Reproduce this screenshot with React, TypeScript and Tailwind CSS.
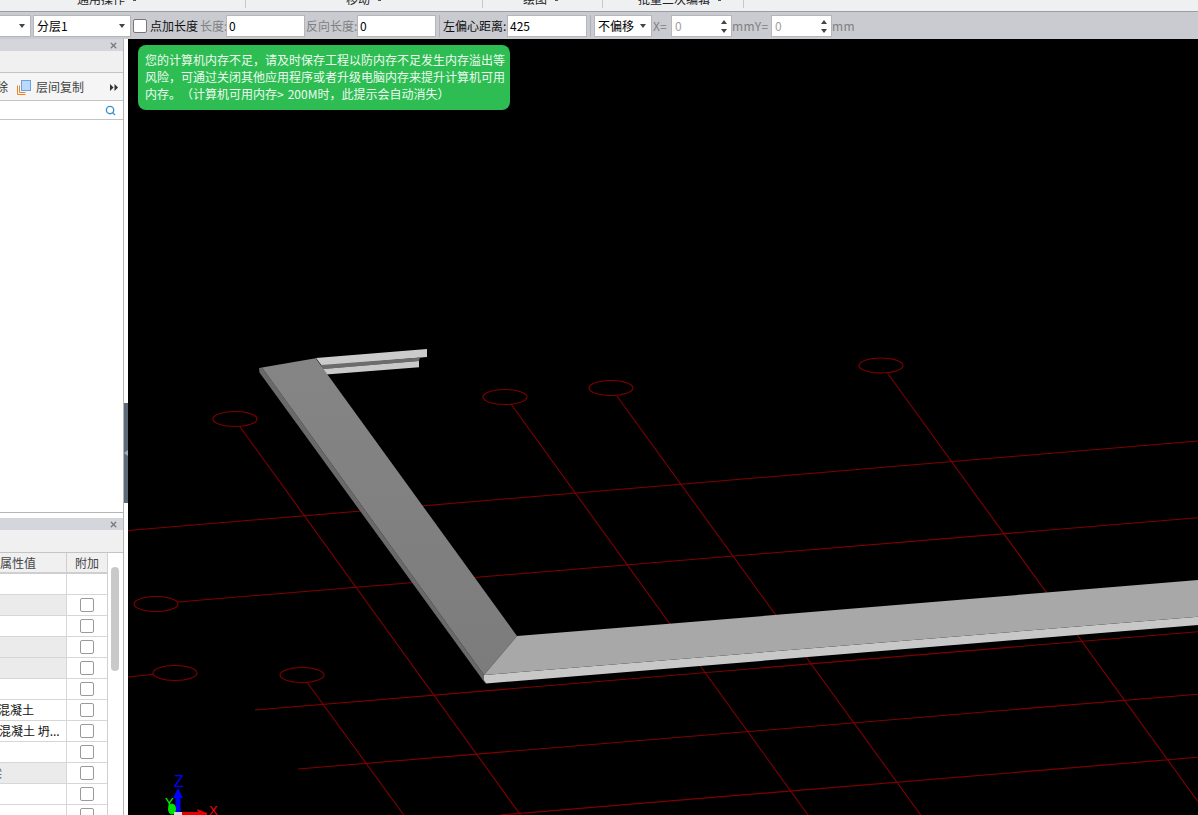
import React from 'react';
import { Search, X } from 'lucide-react';

const Caret: React.FC<{ up?: boolean }> = ({ up }) => (
  <svg width="6" height="4" viewBox="0 0 6 4" className="shrink-0">
    <polygon points={up ? '3,0 6,4 0,4' : '0,0 6,0 3,4'} fill="#444" />
  </svg>
);

const Select: React.FC<{ label?: string; className: string }> = ({ label, className }) => (
  <div className={`flex h-[22px] shrink-0 items-center justify-between border border-[#b4b6ba] bg-white pl-[3px] pr-[5px] text-black ${className}`}>
    <span>{label}</span>
    <Caret />
  </div>
);

const TextField: React.FC<{ value: string; className: string }> = ({ value, className }) => (
  <div className={`flex h-[22px] shrink-0 items-center border border-[#b4b6ba] bg-white pl-[2px] text-black ${className}`}>
    {value}
  </div>
);

const Spinner: React.FC<{ className: string }> = ({ className }) => (
  <div className={`flex h-[22px] shrink-0 items-center justify-between border border-[#b4b6ba] bg-white pl-[3px] pr-[4px] text-[#a0a0a0] ${className}`}>
    <span>0</span>
    <div className="flex flex-col gap-[5px]">
      <Caret up />
      <Caret />
    </div>
  </div>
);

const ToolbarSep = () => <div className="mx-[3px] h-[22px] w-px shrink-0 bg-[#aeb0b4]" />;

const PanelHeader = () => (
  <div className="flex h-[12px] shrink-0 items-center justify-end bg-[#d4d6db] pr-[5px]">
    <X size={9} strokeWidth={3.5} color="#777" />
  </div>
);

const ribbonGroups = [
  { label: '通用操作', width: 'w-[246px]', pad: 'pl-[77px]' },
  { label: '移动', width: 'w-[237px]', pad: 'pl-[100px]' },
  { label: '绘图', width: 'w-[120px]', pad: 'pl-[40px]' },
  { label: '批量二次编辑', width: 'w-[141px]', pad: 'pl-[35px]' },
];

const rows: { shaded?: boolean; noCheck?: boolean; node?: React.ReactNode }[] = [
  { noCheck: true },
  { shaded: true },
  {},
  { shaded: true },
  { shaded: true },
  {},
  { node: <span className="ml-[-2px]">混凝土</span> },
  { node: <span className="ml-[-1px] whitespace-nowrap">混凝土 坍...</span> },
  {},
  { shaded: true, node: <span className="ml-[-10px] text-[#555]">梁</span> },
  {},
  {},
];

const rings = [
  [235, 419],
  [505, 397],
  [611, 388],
  [881, 365.5],
  [156, 604],
  [175, 673],
  [302, 675],
];

const gridLines = [
  [128, 530.5, 1198, 441],
  [178, 602, 1198, 517.7],
  [128, 677, 153.6, 674.3],
  [255, 710, 1198, 631.7],
  [298, 769, 1198, 694.3],
  [500, 815, 1198, 757.3],
  [240, 426.7, 520.5, 815],
  [511, 404, 808, 815],
  [616.7, 395.7, 920.7, 815],
  [887.6, 373.3, 1198, 801.7],
  [307, 682.3, 403.8, 815],
];

const Scene = () => (
  <svg viewBox="128 39 1070 776" className="block h-full w-full">
    <defs>
      <linearGradient id="beamFace" x1="0" y1="0" x2="0" y2="1">
        <stop offset="0" stopColor="#858585" />
        <stop offset="1" stopColor="#7c7c7c" />
      </linearGradient>
    </defs>
    {gridLines.map(([x1, y1, x2, y2], i) => (
      <line key={i} x1={x1} y1={y1} x2={x2} y2={y2} stroke="#800000" strokeWidth="1.1" />
    ))}
    {rings.map(([cx, cy], i) => (
      <ellipse key={i} cx={cx} cy={cy} rx="22" ry="7.5" fill="none" stroke="#800000" strokeWidth="1.1" />
    ))}
    {/* far beam */}
    <polygon points="316,358 427,349 427,357 322,366" fill="#cbcbcb" />
    <polygon points="321,365 420,357.5 419,361 323,369" fill="#6c6c6c" />
    <polygon points="323,369 419,361 419,367.3 326,374.5" fill="#c9c9c9" />
    {/* long beam */}
    <polygon points="259,368 262,367.5 484,675 485,683 259.5,372.5" fill="#6a6a6a" />
    <polygon points="262,367.5 315.7,358.3 517,636 484,675" fill="url(#beamFace)" />
    {/* near beam */}
    <polygon points="484,675 1198,616.7 1198,625 486,683.5 484,680" fill="#c8c8c8" />
    <polygon points="517,636 663,624.3 1198,580 1198,616.7 484,675" fill="#a8a8a8" />
    {/* axis gizmo */}
    <text x="174" y="787" fontSize="16" fill="#0000ff" fontFamily="Liberation Sans, sans-serif">Z</text>
    <text x="165" y="807" fontSize="13" fill="#00ff00" fontFamily="Liberation Sans, sans-serif">Y</text>
    <text x="209" y="815" fontSize="13" fill="#ff0000" fontFamily="Liberation Sans, sans-serif">X</text>
    <rect x="175.5" y="797" width="5" height="16" fill="#0000ff" />
    <polygon points="178,788 183,798 173,798" fill="#0000ff" />
    <ellipse cx="172" cy="809" rx="4" ry="5.5" fill="#00e000" />
    <polygon points="182,812 198,812 197,809 207,813 207,815 182,815" fill="#e80000" />
    <rect x="174" y="812" width="8" height="3" fill="#d8d8d8" />
  </svg>
);

export default function App() {
  return (
    <div className="flex h-[815px] w-[1198px] flex-col overflow-hidden bg-white font-['Noto_Sans_CJK_SC','Liberation_Sans',sans-serif] text-[12px] text-[#333]">
      {/* ribbon, only its bottom edge is on screen */}
      <div className="flex h-[11px] shrink-0 items-start overflow-hidden bg-[#eef0f2]">
        {ribbonGroups.map(g => (
          <div key={g.label} className={`flex h-[8px] items-end gap-[8px] border-r border-[#c4c7cb] ${g.width} ${g.pad}`}>
            <span className="mb-[2px] shrink-0 leading-[14px] text-[#222]">{g.label}</span>
            <span className="mb-[7px] h-px w-[3px] shrink-0 bg-[#555]" />
          </div>
        ))}
      </div>

      {/* draw options toolbar */}
      <div className="flex h-[28px] shrink-0 items-center overflow-hidden whitespace-nowrap border-t border-[#9b9da1] bg-[#c9cbd0] pt-px leading-none">
        <Select className="ml-[-1px] w-[32px]" />
        <Select label="分层1" className="ml-[2px] w-[98px]" />
        <div className="ml-[2px] h-[14px] w-[14px] shrink-0 rounded-[2px] border border-[#777] bg-white" />
        <span className="ml-[3px] w-[50px] shrink-0 text-[#111]">点加长度</span>
        <span className="w-[26px] shrink-0 text-[#808080]">长度:</span>
        <TextField value="0" className="w-[79px]" />
        <span className="ml-px w-[51px] shrink-0 text-[#808080]">反向长度:</span>
        <TextField value="0" className="w-[79px]" />
        <ToolbarSep />
        <span className="w-[64px] shrink-0 text-[#111]">左偏心距离:</span>
        <TextField value="425" className="w-[80px]" />
        <ToolbarSep />
        <Select label="不偏移" className="w-[58px]" />
        <span className="ml-px w-[18px] shrink-0 text-[#808080]">X=</span>
        <Spinner className="w-[61px]" />
        <span className="w-[39px] shrink-0 tracking-[0.4px] text-[#808080]">mmY=</span>
        <Spinner className="w-[61px]" />
        <span className="shrink-0 tracking-[0.4px] text-[#808080]">mm</span>
      </div>

      <div className="flex min-h-0 flex-1">
        {/* left dock */}
        <div className="flex w-[124px] shrink-0 flex-col border-r border-[#b5b5b5]">
          <div className="flex h-[474px] shrink-0 flex-col border-b border-[#b5b5b5]">
            <PanelHeader />
            <div className="h-[22px] shrink-0 border-b border-[#c4c4c4] bg-[#f0f0f0]" />
            <div className="flex h-[28px] shrink-0 items-center border-b border-[#c4c4c4] bg-[#f5f5f5] pr-[5px] pt-px">
              <span className="w-[17px] shrink-0 overflow-hidden whitespace-nowrap">
                <span className="ml-[-4px] inline-block">除</span>
              </span>
              <svg width="14" height="15" viewBox="0 0 14 15" className="shrink-0">
                <path d="M.5 5.5v9h8M2.5 5.5v7h6" fill="none" stroke="#e8842c" />
                <rect x="4.5" y=".5" width="9" height="10" fill="#b9d9ff" stroke="#6d9fd8" />
              </svg>
              <span className="ml-[5px] shrink-0 text-[#444]">层间复制</span>
              <svg width="8" height="7" viewBox="0 0 8 7" className="ml-auto shrink-0">
                <polygon points="0,0 3.5,3.5 0,7" fill="#333" />
                <polygon points="4.5,0 8,3.5 4.5,7" fill="#333" />
              </svg>
            </div>
            <div className="flex h-[19px] shrink-0 items-center justify-end border-b border-[#c4c4c4] pr-[7px]">
              <Search size={11} strokeWidth={3} color="#3f8fc4" />
            </div>
            <div className="flex-1" />
          </div>

          <div className="h-[5px] shrink-0" />

          <div className="flex min-h-0 flex-1 flex-col">
            <PanelHeader />
            <div className="h-[23px] shrink-0 border-b border-[#c4c4c4] bg-[#f0f0f0]" />
            <div className="flex min-h-0 flex-1">
              <div className="w-[108px] shrink-0 overflow-hidden border-r border-[#d0d0d0]">
                <div className="flex h-[21px] border-b-2 border-[#cfcfcf] bg-[#f0f0f0] text-[#444]">
                  <div className="flex w-[67px] items-center overflow-hidden whitespace-nowrap border-r border-[#cfcfcf]">属性值</div>
                  <div className="flex flex-1 items-center justify-center">附加</div>
                </div>
                {rows.map((row, i) => (
                  <div key={i} className="flex h-[21px] border-b border-[#d6d6d6]">
                    <div className={`flex w-[67px] items-center overflow-hidden whitespace-nowrap border-r border-[#d6d6d6] text-[#111] ${row.shaded ? 'bg-[#ebebeb]' : 'bg-white'}`}>
                      {row.node}
                    </div>
                    <div className="flex flex-1 items-center justify-center">
                      {!row.noCheck && <div className="h-[14px] w-[14px] rounded-[2px] border border-[#999] bg-white" />}
                    </div>
                  </div>
                ))}
              </div>
              <div className="flex-1 pl-[3px] pt-[14px]">
                <div className="h-[104px] w-[8px] rounded-[4px] bg-[#c9c9c9]" />
              </div>
            </div>
          </div>
        </div>

        {/* splitter */}
        <div className="w-[4px] shrink-0 bg-white pt-[364px]">
          <div className="flex h-[100px] w-[4px] items-center justify-center bg-[#5d6b78]">
            <svg width="4" height="6" viewBox="0 0 4 6">
              <polygon points="4,0 0,3 4,6" fill="#a5adb5" />
            </svg>
          </div>
        </div>

        {/* 3d view */}
        <div className="relative min-w-0 flex-1 bg-black">
          <Scene />
          <div className="absolute left-[10px] top-[6px] h-[65px] w-[372px] rounded-[8px] bg-[#2dbd53] pl-[7px] pr-[5px] pt-[6px] text-[12px] leading-[17px] text-[#eefbf1] [text-spacing-trim:space-all]">
            您的计算机内存不足，请及时保存工程以防内存不足发生内存溢出等风险，可通过关闭其他应用程序或者升级电脑内存来提升计算机可用内存。（计算机可用内存&gt;<span className="ml-[4px]">200M</span>时，此提示会自动消失）
          </div>
        </div>
      </div>
    </div>
  );
}
